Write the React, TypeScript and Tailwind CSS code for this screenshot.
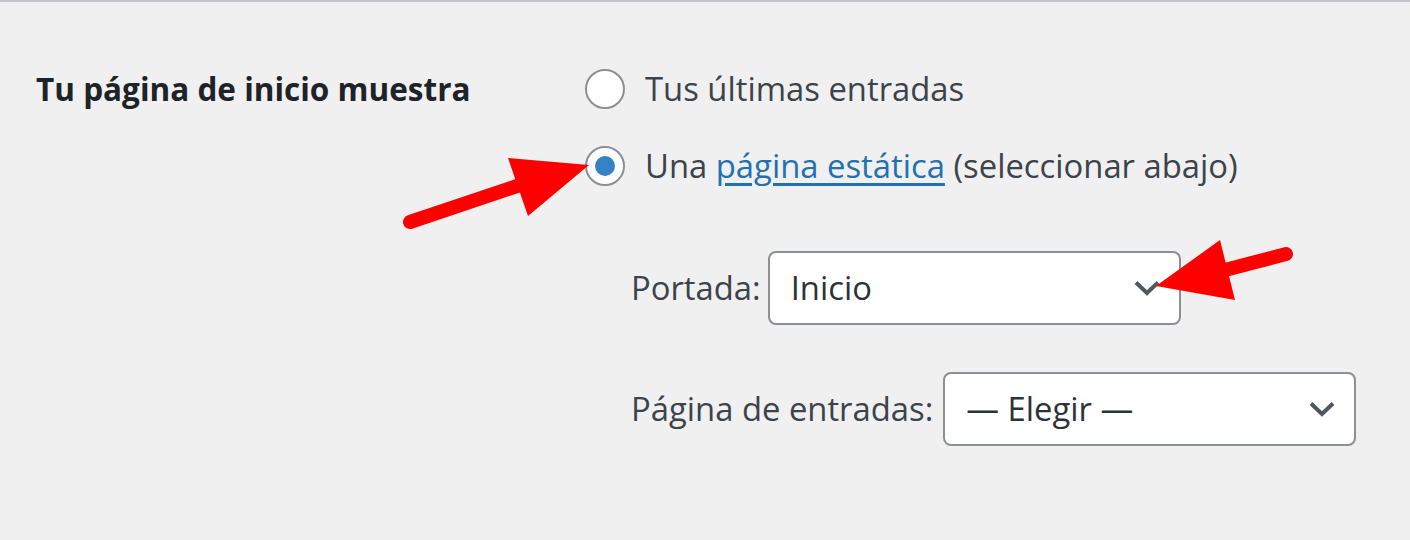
import React from 'react';

const Chevron = () => (
  <svg width="26" height="16" viewBox="0 0 26 16" fill="none" aria-hidden="true">
    <path d="M2 2.5l11 10.5 11-10.5" stroke="#50575e" strokeWidth="4" />
  </svg>
);

const Radio = ({ checked }: { checked?: boolean }) => (
  <span className="flex h-[40px] w-[40px] shrink-0 items-center justify-center rounded-full border-2 border-[#8c8f94] bg-white">
    {checked && <span className="h-[20px] w-[20px] rounded-full bg-[#3582c4]" />}
  </span>
);

const Select = ({ value }: { value: string }) => (
  <div className="flex h-[74px] w-[413px] items-center justify-between rounded-[8px] border-2 border-[#8c8f94] bg-white pl-[21px] pr-[19px] text-[#2c3338]">
    <span>{value}</span>
    <Chevron />
  </div>
);

export default function App() {
  return (
    <div
      className="relative h-[540px] w-[1410px] overflow-hidden border-t-2 border-[#c3c4c7] bg-[#f0f0f1] text-[32.8px] leading-[40px] text-[#3c434a]"
      style={{ fontFamily: '"Open Sans", "Noto Sans", sans-serif' }}
    >
      <div className="flex px-[36px] pt-[67px]">
        <div className="h-[40px] w-[549px] shrink-0 text-[31.5px] font-bold text-[#1d2327]">
          Tu página de inicio muestra
        </div>
        <div className="flex flex-col">
          <label className="flex h-[40px] items-center gap-[20px]">
            <Radio />
            <span>Tus últimas entradas</span>
          </label>
          <label className="mt-[37px] flex h-[40px] items-center gap-[20px]">
            <Radio checked />
            <span>
              Una{' '}
              <a className="text-[#2271b1] underline underline-offset-[5px]" href="#">
                página estática
              </a>{' '}
              (seleccionar abajo)
            </span>
          </label>
          <div className="ml-[46px] mt-[65px] flex items-center gap-[7px]">
            <span>Portada:</span>
            <Select value="Inicio" />
          </div>
          <div className="ml-[46px] mt-[47px] flex items-center gap-[10px]">
            <span>Página de entradas:</span>
            <Select value="— Elegir —" />
          </div>
        </div>
      </div>

      <svg
        className="pointer-events-none absolute left-0 top-0"
        width="1410"
        height="540"
        viewBox="0 0 1410 540"
        aria-hidden="true"
      >
        <line x1="410" y1="220" x2="520" y2="183" stroke="#ff0000" strokeWidth="14" strokeLinecap="round" />
        <polygon points="508,156 528,214 589,163" fill="#ff0000" />
        <line x1="1286" y1="252" x2="1225" y2="268" stroke="#ff0000" strokeWidth="14" strokeLinecap="round" />
        <polygon points="1220,238 1235,298 1156,284" fill="#ff0000" />
      </svg>
    </div>
  );
}
